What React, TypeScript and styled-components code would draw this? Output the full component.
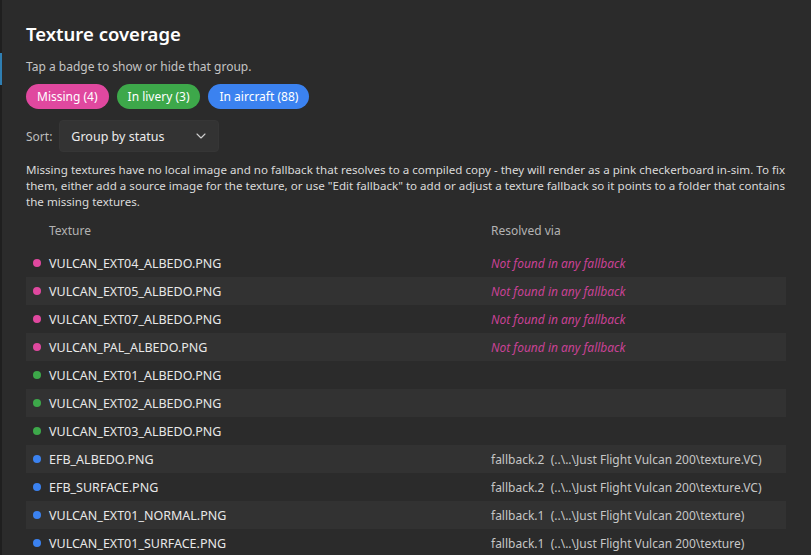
import React from "react";
import styled, { createGlobalStyle } from "styled-components";

const Global = createGlobalStyle`
  html, body { margin: 0; padding: 0; background: #2b2b2b; }
  body { font-family: "Noto Sans", "Open Sans", sans-serif; color: #e6e6e6; overflow: hidden; }
`;

const Shell = styled.div`
  display: flex;
  width: 811px;
  height: 555px;
  overflow: hidden;
  background: #2b2b2b;
`;

const EdgeStrip = styled.div<{ $w: number; $bg: string; $accentTop: number; $accentH: number }>`
  flex: 0 0 ${(p) => p.$w}px;
  background: ${(p) => p.$bg};
  display: flex;
  flex-direction: column;
  &::before {
    content: "";
    margin-top: ${(p) => p.$accentTop}px;
    height: ${(p) => p.$accentH}px;
    background: #2f7fb3;
  }
`;

const Main = styled.div`
  flex: 1;
  padding: 20px 22px 0 24px;
  display: flex;
  flex-direction: column;
`;

const Title = styled.h1`
  margin: 0;
  font-size: 18.5px;
  font-weight: 600;
  color: #ffffff;
  line-height: 28px;
`;

const Sub = styled.p`
  margin: 11px 0 0;
  font-size: 12px;
  line-height: 16px;
  color: #c4c4c4;
`;

const Badges = styled.div`
  display: flex;
  gap: 8px;
  margin-top: 9px;
`;

const Badge = styled.button<{ $c: string }>`
  border: none;
  background: ${(p) => p.$c};
  color: #fff;
  font-family: inherit;
  font-size: 12px;
  height: 25px;
  padding: 0 11px;
  border-radius: 13px;
  line-height: 25px;
`;

const SortRow = styled.div`
  display: flex;
  align-items: center;
  gap: 7px;
  margin-top: 11px;
`;

const SortLabel = styled.span`
  font-size: 12px;
  color: #bdbdbd;
`;

const Select = styled.div`
  width: 160px;
  height: 32px;
  box-sizing: border-box;
  background: #333333;
  border: 1px solid #363636;
  border-radius: 4px;
  display: flex;
  align-items: center;
  justify-content: space-between;
  padding: 0 12px 0 11px;
  font-size: 12.5px;
  color: #ececec;
`;

const Para = styled.p`
  margin: 10px 0 0;
  font-size: 11.6px;
  line-height: 16px;
  color: #dadada;
  width: 770px;
`;

const Table = styled.div`
  margin-top: 5px;
  width: 760px;
  display: flex;
  flex-direction: column;
`;

const Grid = styled.div<{ $alt?: boolean; $h: number }>`
  display: grid;
  grid-template-columns: 23px 442px 1fr;
  align-items: center;
  height: ${(p) => p.$h}px;
  background: ${(p) => (p.$alt ? "#323232" : "transparent")};
`;

const HeadCell = styled.span`
  font-size: 12px;
  color: #b3b3b3;
`;

const Dot = styled.span<{ $c: string }>`
  width: 8px;
  height: 8px;
  border-radius: 50%;
  background: ${(p) => p.$c};
  justify-self: start;
  margin-left: 7px;
  margin-top: -1px;
`;

const Name = styled.span`
  font-size: 12.5px;
  color: #e8e8e8;
`;

const Resolved = styled.span<{ $missing?: boolean }>`
  font-size: 12px;
  color: ${(p) => (p.$missing ? "#c94296" : "#c6c6c6")};
  font-style: ${(p) => (p.$missing ? "italic" : "normal")};
  white-space: pre;
`;

const PINK = "#e0489f";
const GREEN = "#3da84a";
const BLUE = "#3b82f0";

const rows: { name: string; c: string; res?: string; missing?: boolean }[] = [
  { name: "VULCAN_EXT04_ALBEDO.PNG", c: PINK, res: "Not found in any fallback", missing: true },
  { name: "VULCAN_EXT05_ALBEDO.PNG", c: PINK, res: "Not found in any fallback", missing: true },
  { name: "VULCAN_EXT07_ALBEDO.PNG", c: PINK, res: "Not found in any fallback", missing: true },
  { name: "VULCAN_PAL_ALBEDO.PNG", c: PINK, res: "Not found in any fallback", missing: true },
  { name: "VULCAN_EXT01_ALBEDO.PNG", c: GREEN },
  { name: "VULCAN_EXT02_ALBEDO.PNG", c: GREEN },
  { name: "VULCAN_EXT03_ALBEDO.PNG", c: GREEN },
  { name: "EFB_ALBEDO.PNG", c: BLUE, res: "fallback.2  (..\\..\\Just Flight Vulcan 200\\texture.VC)" },
  { name: "EFB_SURFACE.PNG", c: BLUE, res: "fallback.2  (..\\..\\Just Flight Vulcan 200\\texture.VC)" },
  { name: "VULCAN_EXT01_NORMAL.PNG", c: BLUE, res: "fallback.1  (..\\..\\Just Flight Vulcan 200\\texture)" },
  { name: "VULCAN_EXT01_SURFACE.PNG", c: BLUE, res: "fallback.1  (..\\..\\Just Flight Vulcan 200\\texture)" },
];

const Chevron = () => (
  <svg width="10" height="6" viewBox="0 0 10 6" fill="none">
    <path d="M1 1l4 4 4-4" stroke="#cfcfcf" strokeWidth="1.1" strokeLinecap="round" strokeLinejoin="round" />
  </svg>
);

export default function App() {
  return (
    <Shell>
      <Global />
      <EdgeStrip $w={2} $bg="#1f1f1f" $accentTop={53} $accentH={32} />
      <Main>
        <Title>Texture coverage</Title>
        <Sub>Tap a badge to show or hide that group.</Sub>
        <Badges>
          <Badge $c={PINK}>Missing (4)</Badge>
          <Badge $c={GREEN}>In livery (3)</Badge>
          <Badge $c={BLUE}>In aircraft (88)</Badge>
        </Badges>
        <SortRow>
          <SortLabel>Sort:</SortLabel>
          <Select>
            <span>Group by status</span>
            <Chevron />
          </Select>
        </SortRow>
        <Para>
          Missing textures have no local image and no fallback that resolves to a compiled copy - they will render as a pink checkerboard in-sim. To fix them, either add a source image for the texture, or use "Edit fallback" to add or adjust a texture fallback so it points to a folder that contains the missing textures.
        </Para>
        <Table>
          <Grid $h={30}>
            <span />
            <HeadCell>Texture</HeadCell>
            <HeadCell>Resolved via</HeadCell>
          </Grid>
          <Grid $h={4} />
          {rows.map((r, i) => (
            <Grid key={r.name} $h={28} $alt={i % 2 === 1}>
              <Dot $c={r.c} />
              <Name>{r.name}</Name>
              <Resolved $missing={r.missing}>{r.res ?? ""}</Resolved>
            </Grid>
          ))}
        </Table>
      </Main>
      <EdgeStrip $w={3} $bg="#2e2e2e" $accentTop={231} $accentH={31} />
    </Shell>
  );
}
